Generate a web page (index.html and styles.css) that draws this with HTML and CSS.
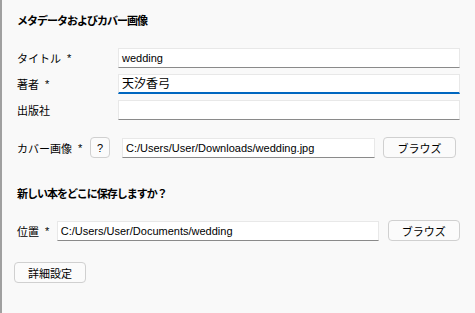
FILE: index.html
```html
<!DOCTYPE html>
<html lang="ja">

<head>
    <meta charset="UTF-8">
    <title>メタデータ</title>
    <link rel="stylesheet" href="styles.css">
</head>

<body>
    <div class="panel">
        <h2 class="section-title">メタデータおよびカバー画像</h2>

        <div class="field-grid">
            <label class="label">タイトル<span class="req">*</span></label>
            <div class="input">wedding</div>

            <label class="label">著者<span class="req">*</span></label>
            <div class="input focused">天汐香弓</div>

            <label class="label">出版社</label>
            <div class="input"></div>
        </div>

        <div class="row cover-row">
            <label class="label cover-label">カバー画像<span class="req">*</span></label>
            <button class="btn help-btn">?</button>
            <div class="input cover-input">C:/Users/User/Downloads/wedding.jpg</div>
            <button class="btn browse-btn">ブラウズ</button>
        </div>

        <h2 class="section-title save-title">新しい本をどこに保存しますか？</h2>

        <div class="row location-row">
            <label class="label location-label">位置<span class="req">*</span></label>
            <div class="input location-input">C:/Users/User/Documents/wedding</div>
            <button class="btn browse-btn">ブラウズ</button>
        </div>

        <button class="btn details-btn">詳細設定</button>
    </div>
</body>

</html>
```

FILE: styles.css
```css
html, body {
    margin: 0;
    padding: 0;
    height: 100%;
}

body {
    font-family: 'Liberation Sans', 'Noto Sans CJK JP', sans-serif;
    font-size: 11px;
    color: #000;
    background-color: #f9f9f9;
}

.panel {
    box-sizing: border-box;
    height: 100%;
    border-left: 2px solid #a0a0a0;
    padding: 13px 15px 0 15px;
}

.section-title {
    margin: 0;
    font-size: 11px;
    line-height: 16px;
    font-weight: bold;
    letter-spacing: -1px;
}

.field-grid {
    display: grid;
    grid-template-columns: 101px 1fr;
    row-gap: 6px;
    margin-top: 19px;
}

.label {
    display: flex;
    align-items: center;
    font-size: 11px;
    white-space: nowrap;
}

.req {
    margin-left: 6px;
}

.input {
    box-sizing: border-box;
    height: 20px;
    padding: 0 3px;
    line-height: 18px;
    background-color: #fff;
    border: 1px solid #e8e8e8;
    border-bottom-color: #8a8a8a;
    white-space: nowrap;
    overflow: hidden;
}

.input.focused {
    font-size: 12px;
    border-bottom: 2px solid #0067c0;
}

.row {
    display: flex;
    align-items: center;
}

.cover-row {
    margin-top: 17px;
}

.cover-label {
    width: 73px;
}

.btn {
    box-sizing: border-box;
    height: 21px;
    padding: 0;
    font-family: inherit;
    font-size: 11px;
    color: #000;
    background-color: #fbfbfb;
    border: 1px solid #d0d0d0;
    border-radius: 4px;
}

.help-btn {
    width: 20px;
}

.cover-input {
    width: 253px;
    margin-left: 12px;
}

.browse-btn {
    width: 73px;
    margin-left: 8px;
}

.save-title {
    margin-top: 28px;
}

.location-row {
    margin-top: 18px;
}

.location-label {
    width: 40px;
}

.location-input {
    width: 324px;
}

.location-row .browse-btn {
    margin-left: 9px;
}

.details-btn {
    display: block;
    width: 72px;
    margin-top: 21px;
    margin-left: -3px;
}
```
